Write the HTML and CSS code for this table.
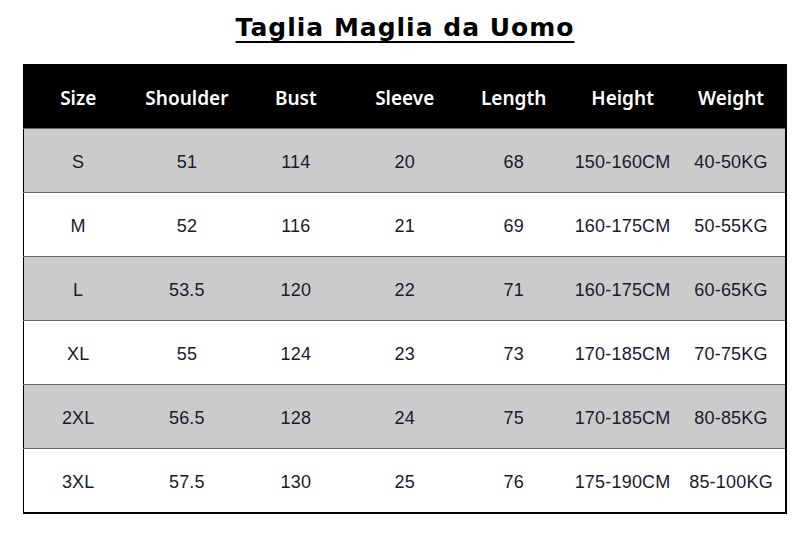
FILE: index.html
```html
<!DOCTYPE html>
<html>
<head>
<meta charset="utf-8">
<link rel="stylesheet" href="styles.css">
</head>
<body>
<div class="page">
  <h1 class="title">Taglia Maglia da Uomo</h1>
  <table class="chart">
    <thead>
      <tr><th>Size</th><th>Shoulder</th><th>Bust</th><th>Sleeve</th><th>Length</th><th>Height</th><th>Weight</th></tr>
    </thead>
    <tbody>
      <tr class="grey"><td>S</td><td>51</td><td>114</td><td>20</td><td>68</td><td>150-160CM</td><td>40-50KG</td></tr>
      <tr><td>M</td><td>52</td><td>116</td><td>21</td><td>69</td><td>160-175CM</td><td>50-55KG</td></tr>
      <tr class="grey"><td>L</td><td>53.5</td><td>120</td><td>22</td><td>71</td><td>160-175CM</td><td>60-65KG</td></tr>
      <tr><td>XL</td><td>55</td><td>124</td><td>23</td><td>73</td><td>170-185CM</td><td>70-75KG</td></tr>
      <tr class="grey"><td>2XL</td><td>56.5</td><td>128</td><td>24</td><td>75</td><td>170-185CM</td><td>80-85KG</td></tr>
      <tr><td>3XL</td><td>57.5</td><td>130</td><td>25</td><td>76</td><td>175-190CM</td><td>85-100KG</td></tr>
    </tbody>
  </table>
</div>
</body>
</html>
```
FILE: styles.css
```css
html, body { margin: 0; padding: 0; background: #fff; }
.page { padding: 8px 0 0 23px; width: 764px; }
.title {
  margin: 0 0 14px 0;
  height: 42px;
  font-family: "DejaVu Sans", sans-serif;
  font-weight: 700;
  font-size: 25px;
  letter-spacing: 1px;
  line-height: 40px;
  text-align: center;
  text-decoration: underline;
  text-decoration-thickness: 2px;
  text-underline-offset: 5px;
  color: #000;
}
.chart {
  width: 764px;
  border-collapse: collapse;
  table-layout: fixed;
  border-left: 1px solid #000;
  border-right: 2px solid #000;
  border-bottom: 2px solid #000;
}
.chart th {
  background: #000;
  color: #fff;
  height: 60px;
  padding: 4px 0 0 0;
  font-family: "Noto Sans", sans-serif;
  font-weight: 600;
  font-size: 19px;
  text-align: center;
}
.chart td {
  height: 60px;
  padding: 3px 0 0 0;
  text-align: center;
  font-family: "Liberation Sans", Arial, sans-serif;
  font-size: 18px;
  letter-spacing: 0.2px;
  color: #1a1a30;
  border-top: 1px solid #666;
}
.chart tr.grey td { background: #cbcbcb; }
```
